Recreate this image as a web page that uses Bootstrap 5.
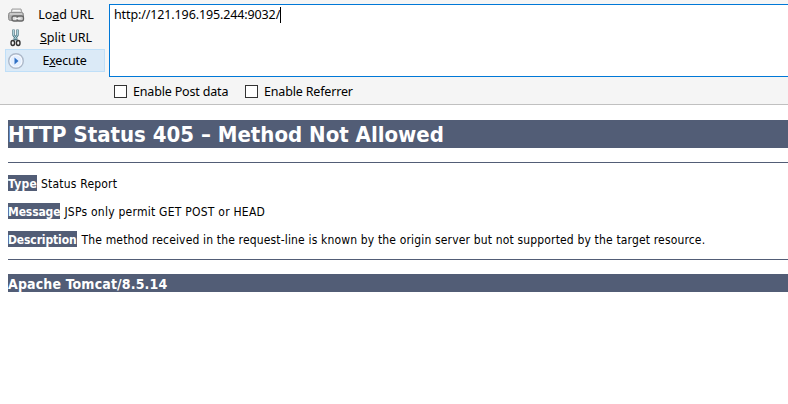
<!DOCTYPE html>
<html lang="en">
<head>
<meta charset="utf-8">
<meta name="viewport" content="width=device-width, initial-scale=1">
<title>HTTP Status 405 – Method Not Allowed</title>
<link href="https://cdn.jsdelivr.net/npm/bootstrap@5.3.0/dist/css/bootstrap.min.css" rel="stylesheet">
<style>
body{background:#fff;color:#000;overflow:hidden;font:12px/16px "DejaVu Sans Condensed","DejaVu Sans",sans-serif;font-stretch:condensed}
.toolbar{height:105px;background:#f5f5f5;border-bottom:1px solid #c0c0c0;font:12.5px/17px "Noto Sans","Open Sans",sans-serif}
.actions{width:109px;padding:3px 4px 0 5px}
.action{height:23px;border:1px solid transparent;background:none;color:#000;font:inherit}
.action svg{width:18px;height:18px;margin-left:1px}
.action .txt{flex:1;text-align:center;padding-left:3px;white-space:nowrap}
.action.active-run{background:#dbeaf7;border-color:#bfdff8}
.active-run .txt{padding-left:0;letter-spacing:-.25px}
.urlbox{height:73px;margin-top:4px;border:1px solid #0078d7;border-right:0;background:#fff;padding:1px 4px;letter-spacing:-.12px}
.caret{width:1px;height:16px;margin-top:1px;background:#000}
.box{width:13px;height:13px;border:1px solid #333;background:#fff}
.options{padding:8px 0 0 5px;height:27px;letter-spacing:-.17px}
.options label{height:13px;gap:6px;white-space:nowrap}
.options label:first-child{width:115px}
.report{padding:15px 0 0 8px}
.band{background:#525d76;color:#fff;font-weight:700;white-space:nowrap}
.title{font-size:22px;line-height:28px;margin:0 0 14px}
.title span{position:relative;top:1px}
.rule{height:1px;background:#525d76}
.entry{height:16px;line-height:18px;margin:12px 0 0;white-space:nowrap}
.entry .band{height:16px}
.status-value{margin-left:4px;letter-spacing:.2px}
.message-name,.description-name{letter-spacing:-.12px}
.type-name{letter-spacing:.25px}
.message-value{margin-left:4px;letter-spacing:.24px}
.description-value{margin-left:5px;letter-spacing:.16px}
.lower{margin-top:12px}
.server{font-size:14px;line-height:20px;height:18px;margin:14px 0 0;letter-spacing:.15px}
</style>
<script src="https://cdn.jsdelivr.net/npm/bootstrap@5.3.0/dist/js/bootstrap.bundle.min.js"></script>
</head>
<body>
<header class="toolbar d-flex">
  <div class="actions d-flex flex-column flex-shrink-0">
    <button class="action d-flex align-items-center p-0">
      <svg viewBox="0 0 18 18"><path d="M4 7l1-4h9l1 4" fill="#dedede" stroke="#a0a0a0"/><path d="M6 4.500h7" stroke="#f7f7f7"/><rect x="1.500" y="6.500" width="15" height="8" rx="2" fill="#b0b0b0" stroke="#8f8f8f"/><path d="M3 8h12" stroke="#e2e2e2"/><rect x="5" y="10" width="6.500" height="5" rx="2" fill="#ddd" stroke="#666" stroke-width="1.300"/><rect x="10" y="10" width="6.500" height="5" rx="2" fill="#ccc" stroke="#666" stroke-width="1.300"/><path d="M8 12.500h5.500" stroke="#f2f2f2" stroke-width="1.500"/></svg>
      <span class="txt">Lo<u>a</u>d URL</span>
    </button>
    <button class="action d-flex align-items-center p-0">
      <svg viewBox="0 0 18 18" fill="none"><path d="M6.500 .5v5.500l3.500 5M10.500 .5v5.500L7 11" stroke="#527783" stroke-width="2.400"/><path d="M6.500 1v5l3 4M10.500 1v5l-3 4" stroke="#b5dce5" stroke-width=".9"/><ellipse cx="5.800" cy="14" rx="1.800" ry="2.500" stroke="#333" stroke-width="1.400"/><ellipse cx="11.200" cy="14" rx="1.800" ry="2.500" stroke="#333" stroke-width="1.400"/></svg>
      <span class="txt"><u>S</u>plit URL</span>
    </button>
    <button class="action active-run d-flex align-items-center p-0">
      <svg viewBox="0 0 18 18"><circle cx="9" cy="9" r="7.300" fill="#f7faff" stroke="#adb9ca" stroke-width="1.400"/><circle cx="9" cy="9" r="5.500" fill="#e4efff"/><path d="M7.500 5.500v7l4-3.500z" fill="#2f70c5"/></svg>
      <span class="txt">E<u>x</u>ecute</span>
    </button>
  </div>
  <div class="flex-grow-1">
    <div class="urlbox d-flex align-items-start"><span>http://121.196.195.244:9032/</span><span class="caret"></span></div>
    <div class="options d-flex gap-3">
      <label class="d-flex align-items-center"><span class="box"></span><span>Enable Post data</span></label>
      <label class="d-flex align-items-center"><span class="box"></span><span>Enable Referrer</span></label>
    </div>
  </div>
</header>
<main class="report">
  <h1 class="band title"><span>HTTP Status 405 – Method Not Allowed</span></h1>
  <div class="rule"></div>
  <p class="entry d-flex"><b class="band type-name">Type</b><span class="status-value">Status Report</span></p>
  <p class="entry d-flex"><b class="band message-name">Message</b><span class="message-value">JSPs only permit GET POST or HEAD</span></p>
  <p class="entry d-flex"><b class="band description-name">Description</b><span class="description-value">The method received in the request-line is known by the origin server but not supported by the target resource.</span></p>
  <div class="rule lower"></div>
  <h3 class="band server">Apache Tomcat/8.5.14</h3>
</main>
</body>
</html>
